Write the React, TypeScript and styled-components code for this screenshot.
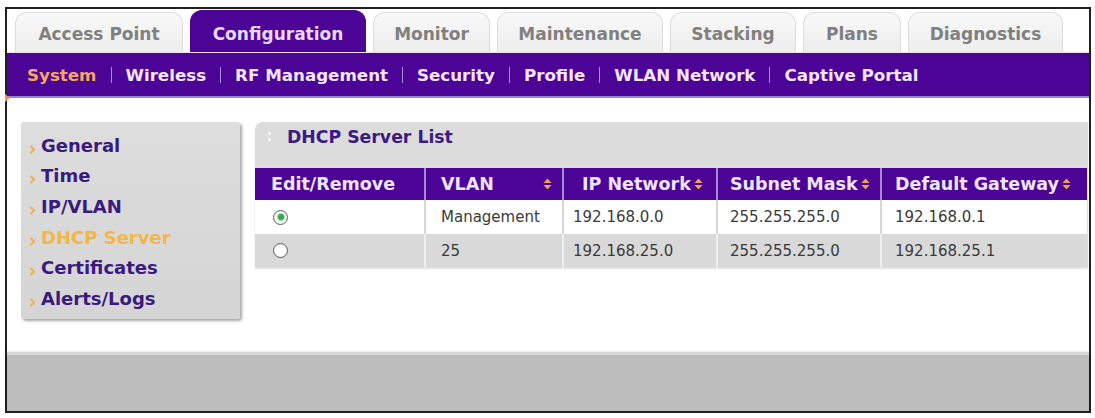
import React from "react";
import styled, { createGlobalStyle } from "styled-components";

const PURPLE = "#4b0496";
const FONT = `"DejaVu Sans", Verdana, sans-serif`;

const GlobalStyle = createGlobalStyle`
  html, body { margin: 0; padding: 0; background: #fff; }
  body { font-family: ${FONT}; }
  * { box-sizing: border-box; }
`;

const Frame = styled.div`
  margin: 7px 0 0 5px;
  width: 1086px;
  height: 406px;
  border: 2px solid #202020;
  display: flex;
  flex-direction: column;
  background: #fff;
`;

const TabRow = styled.nav`
  height: 43px;
  display: flex;
  align-items: flex-end;
  gap: 7px;
  padding-left: 8px;
`;

const Tab = styled.div<{ $w: number; $active?: boolean }>`
  width: ${(p) => p.$w}px;
  height: ${(p) => (p.$active ? 42 : 40)}px;
  padding-top: ${(p) => (p.$active ? 4 : 2)}px;
  display: flex;
  align-items: center;
  justify-content: center;
  border-radius: 12px 12px 0 0;
  font-size: 17px;
  font-weight: bold;
  white-space: nowrap;
  color: ${(p) => (p.$active ? "#e8d9ff" : "#808080")};
  background: ${(p) =>
    p.$active ? PURPLE : "linear-gradient(#f9f9f9, #ededed)"};
  border: 1px solid ${(p) => (p.$active ? PURPLE : "#dcdcdc")};
  border-bottom: none;
`;

const SubNav = styled.div`
  position: relative;
  height: 46px;
  background: ${PURPLE};
  border-top: 1px solid #f0dff0;
  border-bottom: 2px solid #9a80d4;
  display: flex;
  align-items: center;
  gap: 14px;
  padding-left: 20px;
  font-size: 16.7px;
  font-weight: bold;

  &::after {
    content: "";
    position: absolute;
    left: -2px;
    bottom: -6px;
    border-left: 5px solid #e49a4a;
    border-top: 4px solid transparent;
    border-bottom: 4px solid transparent;
  }
`;

const SubLink = styled.span<{ $active?: boolean }>`
  color: ${(p) => (p.$active ? "#f6a75e" : "#f3e6ff")};
  white-space: nowrap;
`;

const SubSep = styled.span`
  width: 1px;
  height: 16px;
  background: #a98fd9;
`;

const Content = styled.div`
  height: 254px;
  display: flex;
  align-items: flex-start;
  gap: 15px;
  padding: 24px 1px 0 14px;
`;

const Sidebar = styled.ul`
  list-style: none;
  margin: 0;
  width: 219px;
  height: 197px;
  padding: 8px 0 6px 8px;
  background: linear-gradient(#dddddd, #d5d5d5);
  border-radius: 3px;
  box-shadow: 2px 2px 3px rgba(0, 0, 0, 0.35);
`;

const SideItem = styled.li<{ $active?: boolean }>`
  height: 30.6px;
  display: flex;
  align-items: center;
  gap: 5px;
  font-size: 18px;
  font-weight: bold;
  color: ${(p) => (p.$active ? "#f3b649" : "#3a1a7e")};
`;

const Chevron = styled.svg`
  flex: none;
  margin-top: 8px;
`;

const Panel = styled.section`
  flex: 1;
  background: #dcdcdc;
  border-top-left-radius: 8px;
  box-shadow: 0 2px 2px rgba(0, 0, 0, 0.12);
`;

const PanelHead = styled.header`
  height: 44px;
  display: flex;
  align-items: flex-start;
  gap: 15px;
  padding: 5px 0 0 13px;
  border-bottom: 1px solid #e6def0;
  margin-bottom: 2px;
`;

const PanelTitle = styled.h2`
  margin: 0;
  line-height: 20px;
  font-size: 17.3px;
  font-weight: bold;
  color: #3d1984;
`;

const Grip = styled.svg`
  margin-top: 5px;
`;

const Table = styled.div`
  display: grid;
  grid-template-columns: 169px 138px 154px 164px 207px;
`;

const HeadCell = styled.div<{ $pad: number; $spread?: boolean; $first?: boolean }>`
  height: 32px;
  display: flex;
  align-items: center;
  justify-content: ${(p) => (p.$spread ? "space-between" : "flex-start")};
  gap: 3px;
  padding: 0 10px 0 ${(p) => p.$pad}px;
  background: ${PURPLE};
  color: #efe4ff;
  font-size: 17.5px;
  font-weight: bold;
  white-space: nowrap;
  border-left: ${(p) => (p.$first ? "none" : "2px solid #a08fc9")};
`;

const Cell = styled.div<{ $pad: number; $alt?: boolean; $first?: boolean; $h: number }>`
  height: ${(p) => p.$h}px;
  display: flex;
  align-items: center;
  padding-left: ${(p) => p.$pad}px;
  background: ${(p) => (p.$alt ? "#d9d9d9" : "#ffffff")};
  color: #3a3a3a;
  font-size: 15px;
  white-space: nowrap;
  border-left: ${(p) =>
    p.$first ? "none" : `2px solid ${p.$alt ? "#efefef" : "#d6d6d6"}`};
`;

const Radio = styled.span<{ $checked?: boolean }>`
  width: 15px;
  height: 15px;
  border-radius: 50%;
  border: 1.5px solid #606060;
  background: radial-gradient(circle, #ffffff 50%, #dedede 100%);
  display: flex;
  align-items: center;
  justify-content: center;

  &::after {
    content: "";
    width: 6px;
    height: 6px;
    border-radius: 50%;
    background: ${(p) => (p.$checked ? "#2fae46" : "transparent")};
    box-shadow: ${(p) => (p.$checked ? "0 0 0 1px #a6dcae" : "none")};
  }
`;

const Footer = styled.footer`
  flex: 1;
  background: #bcbcbc;
  border-top: 3px solid #d6d6d6;
  box-shadow: 0 -1px 2px rgba(0, 0, 0, 0.08);
`;

const SortIcon = () => (
  <svg width="9" height="12" viewBox="0 0 9 12">
    <polygon points="0.5,5 4.5,0.5 8.5,5" fill="#f2a33a" />
    <polygon points="0.5,7 4.5,11.5 8.5,7" fill="#f2a33a" />
  </svg>
);

const tabs = [
  { label: "Access Point", w: 168 },
  { label: "Configuration", w: 176, active: true },
  { label: "Monitor", w: 117 },
  { label: "Maintenance", w: 166 },
  { label: "Stacking", w: 126 },
  { label: "Plans", w: 98 },
  { label: "Diagnostics", w: 155 },
];

const subLinks = [
  "System",
  "Wireless",
  "RF Management",
  "Security",
  "Profile",
  "WLAN Network",
  "Captive Portal",
];

const sideItems = [
  "General",
  "Time",
  "IP/VLAN",
  "DHCP Server",
  "Certificates",
  "Alerts/Logs",
];

const columns = [
  { label: "Edit/Remove", headPad: 16, cellPad: 18, sort: false },
  { label: "VLAN", headPad: 15, cellPad: 15, sort: true, spread: true },
  { label: "IP Network", headPad: 18, cellPad: 9, sort: true },
  { label: "Subnet Mask", headPad: 12, cellPad: 12, sort: true },
  { label: "Default Gateway", headPad: 13, cellPad: 13, sort: true },
];

const rows = [
  { checked: true, vlan: "Management", ip: "192.168.0.0", mask: "255.255.255.0", gw: "192.168.0.1" },
  { checked: false, vlan: "25", ip: "192.168.25.0", mask: "255.255.255.0", gw: "192.168.25.1" },
];

export default function App() {
  return (
    <>
      <GlobalStyle />
      <Frame>
        <TabRow>
          {tabs.map((t) => (
            <Tab key={t.label} $w={t.w} $active={t.active}>
              {t.label}
            </Tab>
          ))}
        </TabRow>
        <SubNav>
          {subLinks.map((l, i) => (
            <React.Fragment key={l}>
              {i > 0 && <SubSep />}
              <SubLink $active={i === 0}>{l}</SubLink>
            </React.Fragment>
          ))}
        </SubNav>
        <Content>
          <Sidebar>
            {sideItems.map((s) => (
              <SideItem key={s} $active={s === "DHCP Server"}>
                <Chevron width="7" height="9" viewBox="0 0 7 9">
                  <polyline points="1.5,1 5,4.5 1.5,8" fill="none" stroke="#f0b04c" strokeWidth="2" />
                </Chevron>
                {s}
              </SideItem>
            ))}
          </Sidebar>
          <Panel>
            <PanelHead>
              <Grip width="4" height="9" viewBox="0 0 4 9">
                <rect x="0" y="0" width="3" height="3" fill="#f2f2f2" />
                <rect x="0" y="6" width="3" height="3" fill="#f2f2f2" />
              </Grip>
              <PanelTitle>DHCP Server List</PanelTitle>
            </PanelHead>
            <Table>
              {columns.map((c, i) => (
                <HeadCell key={c.label} $pad={c.headPad} $spread={c.spread} $first={i === 0}>
                  <span>{c.label}</span>
                  {c.sort && <SortIcon />}
                </HeadCell>
              ))}
              {rows.map((r, ri) => {
                const alt = ri % 2 === 1;
                const h = ri === 0 ? 34 : 33;
                const values: React.ReactNode[] = [
                  <Radio $checked={r.checked} />,
                  r.vlan,
                  r.ip,
                  r.mask,
                  r.gw,
                ];
                return values.map((v, ci) => (
                  <Cell key={`${ri}-${ci}`} $pad={columns[ci].cellPad} $alt={alt} $first={ci === 0} $h={h}>
                    {v}
                  </Cell>
                ));
              })}
            </Table>
          </Panel>
        </Content>
        <Footer />
      </Frame>
    </>
  );
}
